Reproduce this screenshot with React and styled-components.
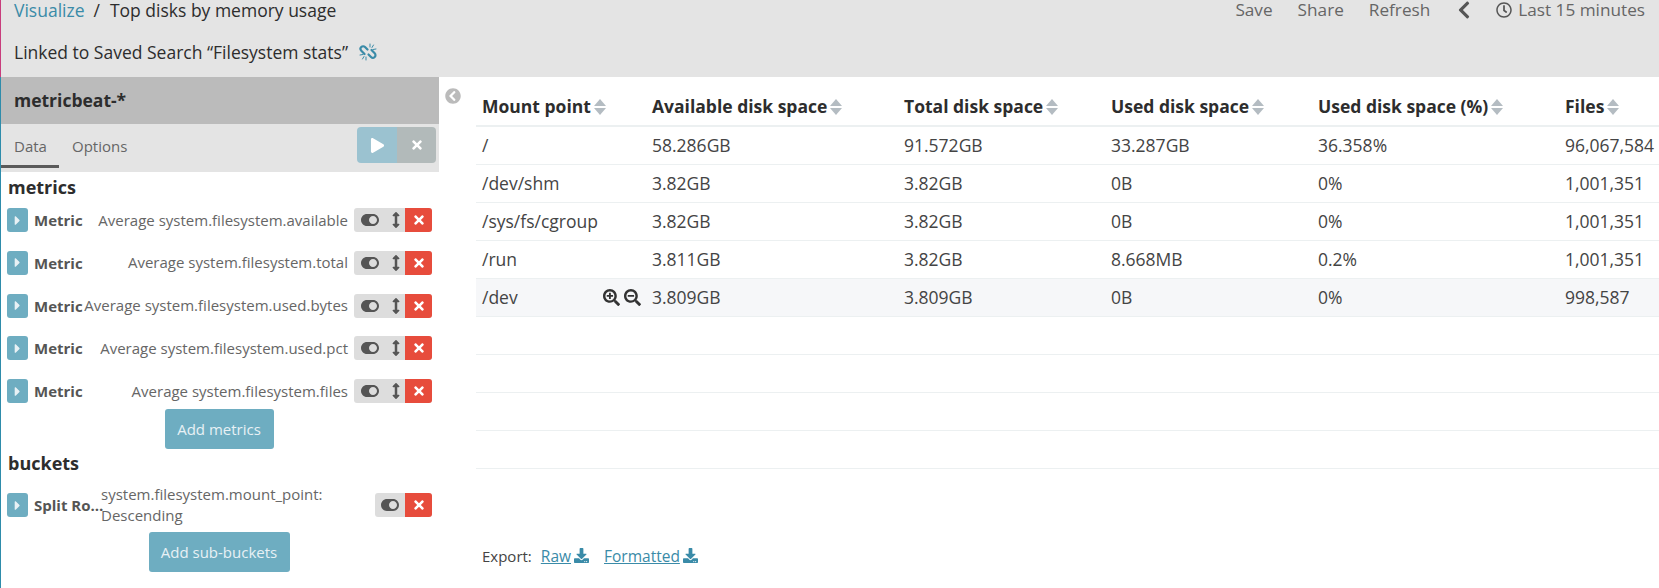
import React from "react";
import styled, { createGlobalStyle } from "styled-components";
import {
  FaArrowsAltV,
  FaCaretRight,
  FaChevronCircleLeft,
  FaChevronLeft,
  FaDownload,
  FaPlay,
  FaRegClock,
  FaSearchMinus,
  FaSearchPlus,
  FaTimes,
  FaToggleOn,
} from "react-icons/fa";

const Global = createGlobalStyle`
  html, body {
    margin: 0;
    height: 588px;
    overflow: hidden;
    background: #fff;
    font-family: "Open Sans", sans-serif;
    color: #444;
  }
  * { box-sizing: border-box; }
`;

const Nav = styled.header`
  height: 77px;
  background: #e4e4e4;
  border-left: 1px solid #c83d7c;
  padding-left: 13px;
  font-size: 17.5px;
`;

const NavTop = styled.div`
  display: flex;
  justify-content: space-between;
  height: 20px;
  line-height: 20px;
  margin-bottom: 21px;
`;

const Crumbs = styled.div`
  display: flex;
  color: #2d2d2d;
`;

const Crumb = styled.a`
  color: #3a8ba8;
`;

const Slash = styled.span`
  margin: 0 10px 0 9px;
`;

const NavMenu = styled.nav`
  display: flex;
  align-items: center;
  padding-right: 14px;
  color: #666;
  font-size: 17.2px;
`;

const MenuItem = styled.span`
  margin-left: ${(p) => p.$gap}px;
  display: flex;
  align-items: center;
  gap: ${(p) => p.$inner || 0}px;
`;

const LinkedLine = styled.div`
  display: flex;
  align-items: center;
  height: 22px;
  color: #2d2d2d;
  gap: 11px;
`;

const Main = styled.main`
  display: flex;
  height: 511px;
  border-left: 1px solid #2e8cab;
`;

const Sidebar = styled.aside`
  width: 438px;
  flex: none;
`;

const IndexName = styled.div`
  height: 47px;
  background: #bbb;
  padding-left: 13px;
  line-height: 47px;
  font-size: 17.5px;
  font-weight: 700;
  color: #2d2d2d;
`;

const TabBar = styled.div`
  position: relative;
  display: flex;
  height: 48px;
  background: #e4e4e4;
  font-size: 15px;
  color: #666;
`;

const Tab = styled.div`
  width: ${(p) => p.$width}px;
  height: 44px;
  padding: 12px 0 0 13px;
  line-height: 20px;
  border-bottom: ${(p) => (p.$active ? "3px solid #5a5a5a" : "none")};
`;

const ApplyGroup = styled.div`
  display: flex;
  height: 36px;
  margin: 3px 3px 0 auto;
  border-radius: 4px;
  overflow: hidden;
  color: #fff;
`;

const ApplyButton = styled.div`
  display: flex;
  align-items: center;
  justify-content: center;
  width: ${(p) => p.$width}px;
  background: ${(p) => p.$bg};
  font-size: ${(p) => p.$size}px;
`;

const SectionTitle = styled.div`
  height: ${(p) => p.$height}px;
  line-height: ${(p) => p.$height}px;
  padding-left: 7px;
  font-size: 18px;
  font-weight: 700;
  color: #2d2d2d;
`;

const Rows = styled.div`
  display: flex;
  flex-direction: column;
  gap: 18.75px;
  margin-top: ${(p) => p.$top}px;
`;

const AggRow = styled.div`
  display: flex;
  align-items: center;
  min-height: 24px;
  padding-left: 6px;
`;

const Expand = styled.div`
  flex: none;
  display: flex;
  align-items: center;
  justify-content: center;
  width: 21px;
  height: 24px;
  background: #6eadc1;
  border-radius: 3px;
  color: #e8f1f5;
  font-size: 15px;
`;

const AggName = styled.div`
  flex: none;
  margin-left: 6px;
  font-size: 15px;
  font-weight: 700;
  color: #555;
  white-space: nowrap;
  overflow: hidden;
  text-overflow: ellipsis;
  width: ${(p) => p.$width}px;
`;

const AggDesc = styled.div`
  flex: 1;
  min-width: 0;
  font-size: 15px;
  line-height: 21px;
  color: #666;
  white-space: nowrap;
  display: flex;
  justify-content: flex-end;
  padding-right: 6px;
`;

const BucketDesc = styled.div`
  flex: 1;
  min-width: 0;
  margin-left: -3px;
  font-size: 15px;
  line-height: 21px;
  color: #666;
`;

const Controls = styled.div`
  flex: none;
  display: flex;
  height: 24px;
  width: ${(p) => p.$width}px;
  margin-right: 7px;
  border-radius: 3px;
  overflow: hidden;
  background: #ddd;
  color: #555;
`;

const ControlCell = styled.div`
  flex: ${(p) => (p.$grow ? 1 : "none")};
  display: flex;
  align-items: center;
  justify-content: center;
  width: ${(p) => (p.$width ? `${p.$width}px` : "auto")};
  font-size: ${(p) => p.$size}px;
`;

const Delete = styled.div`
  flex: none;
  width: 27px;
  margin-left: auto;
  display: flex;
  align-items: center;
  justify-content: center;
  background: #e74c3c;
  color: #fff;
  font-size: 14px;
`;

const AddLine = styled.div`
  display: flex;
  justify-content: center;
  margin-top: ${(p) => p.$top}px;
  padding-right: 2px;
`;

const AddButton = styled.button`
  height: 40px;
  padding: 0;
  width: ${(p) => p.$width}px;
  border: 0;
  border-radius: 3px;
  background: #6eadc1;
  color: #e8f1f5;
  font: 400 15px "Open Sans", sans-serif;
`;

const Gutter = styled.div`
  flex: none;
  width: 37px;
  padding: 11px 0 0 6px;
  font-size: 16px;
  line-height: 16px;
  color: #bbb;
`;

const Content = styled.section`
  flex: 1;
  min-width: 0;
  overflow: hidden;
`;

const Table = styled.table`
  width: 1183px;
  table-layout: fixed;
  border-collapse: collapse;
  font-size: 17.5px;
  color: #444;
`;

const Th = styled.th`
  height: 49px;
  padding: 10px 0 0 6px;
  text-align: left;
  font-weight: 700;
  color: #2d2d2d;
  white-space: nowrap;
  border-bottom: 2px solid #ecf0f1;
`;

const SortIcon = styled.svg`
  width: 12px;
  height: 16px;
  margin-left: 3px;
  fill: #b4bcc2;
  vertical-align: -2px;
`;

const Tr = styled.tr`
  height: 38px;
  background: ${(p) => (p.$hover ? "#f6f7f9" : "transparent")};
`;

const Td = styled.td`
  padding: 0 0 0 6px;
  border-bottom: 1px solid #ecf0f1;
  white-space: nowrap;
`;

const MountCell = styled.div`
  display: flex;
  align-items: center;
  justify-content: space-between;
  padding-right: 5px;
`;

const ZoomIcons = styled.span`
  display: flex;
  gap: 4px;
  color: #333;
  font-size: 17px;
`;

const Export = styled.div`
  display: flex;
  align-items: center;
  margin: 76px 0 0 6px;
  height: 22px;
  font-size: 15px;
  color: #444;
`;

const ExportLink = styled.a`
  margin-left: ${(p) => p.$gap}px;
  color: #3a8ba8;
  font-size: 15.5px;
  text-decoration: underline;

  svg {
    font-size: 15px;
    vertical-align: -1px;
    margin-left: 3px;
  }
`;

const metrics = [
  "Average system.filesystem.available",
  "Average system.filesystem.total",
  "Average system.filesystem.used.bytes",
  "Average system.filesystem.used.pct",
  "Average system.filesystem.files",
];

const columns = [
  ["Mount point", 170],
  ["Available disk space", 252],
  ["Total disk space", 207],
  ["Used disk space", 207],
  ["Used disk space (%)", 247],
  ["Files", 100],
];

const rows = [
  ["/", "58.286GB", "91.572GB", "33.287GB", "36.358%", "96,067,584"],
  ["/dev/shm", "3.82GB", "3.82GB", "0B", "0%", "1,001,351"],
  ["/sys/fs/cgroup", "3.82GB", "3.82GB", "0B", "0%", "1,001,351"],
  ["/run", "3.811GB", "3.82GB", "8.668MB", "0.2%", "1,001,351"],
  ["/dev", "3.809GB", "3.809GB", "0B", "0%", "998,587"],
];

const Sort = () => (
  <SortIcon viewBox="0 0 12 16">
    <path d="M0 7 6 0l6 7z" />
    <path d="M0 9h12l-6 7z" />
  </SortIcon>
);

// fa-chain-broken, the package's unlink is mirrored
const BrokenLink = () => (
  <svg width="18" height="18" viewBox="0 0 18 18" fill="none" stroke="#3a8ba8" strokeLinecap="round">
    <path strokeWidth="2.2" d="M8.5 6.5 6 4a2.6 2.6 0 0 0-3.7 3.7L5.5 11" />
    <path strokeWidth="2.2" d="M9.5 11.5 12 14a2.6 2.6 0 0 0 3.7-3.7L12.5 7" />
    <path strokeWidth="1" d="M11 1v3M14.5 2l-1.5 2.5M17 6l-3 .5M1 12l3-.5M3.5 16 5 13.5M7 17v-3" />
  </svg>
);

export default function App() {
  return (
    <>
      <Global />
      <Nav>
        <NavTop>
          <Crumbs>
            <Crumb>Visualize</Crumb>
            <Slash>/</Slash>
            <span>Top disks by memory usage</span>
          </Crumbs>
          <NavMenu>
            <MenuItem>Save</MenuItem>
            <MenuItem $gap={25}>Share</MenuItem>
            <MenuItem $gap={25}>Refresh</MenuItem>
            <MenuItem $gap={24}>
              <FaChevronLeft size={20} color="#555" />
            </MenuItem>
            <MenuItem $gap={22} $inner={6}>
              <FaRegClock size={16} color="#555" />
              Last 15 minutes
            </MenuItem>
          </NavMenu>
        </NavTop>
        <LinkedLine>
          Linked to Saved Search “Filesystem stats”
          <BrokenLink />
        </LinkedLine>
      </Nav>
      <Main>
        <Sidebar>
          <IndexName>metricbeat-*</IndexName>
          <TabBar>
            <Tab $active $width={58}>Data</Tab>
            <Tab $width={80}>Options</Tab>
            <ApplyGroup>
              <ApplyButton $width={40} $bg="#9bc2d0" $size={15}><FaPlay /></ApplyButton>
              <ApplyButton $width={39} $bg="#b2baba" $size={14}><FaTimes /></ApplyButton>
            </ApplyGroup>
          </TabBar>
          <SectionTitle $height={30}>metrics</SectionTitle>
          <Rows $top={6}>
            {metrics.map((m) => (
              <AggRow key={m}>
                <Expand><FaCaretRight /></Expand>
                <AggName $width={49}>Metric</AggName>
                <AggDesc>{m}</AggDesc>
                <Controls $width={78}>
                  <ControlCell $width={32} $size={18}><FaToggleOn /></ControlCell>
                  <ControlCell $grow $size={16}><FaArrowsAltV /></ControlCell>
                  <Delete><FaTimes /></Delete>
                </Controls>
              </AggRow>
            ))}
          </Rows>
          <AddLine $top={6}>
            <AddButton $width={109}>Add metrics</AddButton>
          </AddLine>
          <SectionTitle $height={28}>buckets</SectionTitle>
          <Rows $top={7}>
            <AggRow>
              <Expand><FaCaretRight /></Expand>
              <AggName $width={70}>Split Rows</AggName>
              <BucketDesc>system.filesystem.mount_point: Descending</BucketDesc>
              <Controls $width={57}>
                <ControlCell $width={30} $size={18}><FaToggleOn /></ControlCell>
                <Delete><FaTimes /></Delete>
              </Controls>
            </AggRow>
          </Rows>
          <AddLine $top={6}>
            <AddButton $width={141}>Add sub-buckets</AddButton>
          </AddLine>
        </Sidebar>
        <Gutter><FaChevronCircleLeft /></Gutter>
        <Content>
          <Table>
            <colgroup>
              {columns.map(([name, width]) => (
                <col key={name} style={{ width }} />
              ))}
            </colgroup>
            <thead>
              <tr>
                {columns.map(([name]) => (
                  <Th key={name}>{name}<Sort /></Th>
                ))}
              </tr>
            </thead>
            <tbody>
              {rows.map((row) => (
                <Tr key={row[0]} $hover={row[0] === "/dev"}>
                  {row.map((cell, i) => (
                    <Td key={i}>
                      {i === 0 && row[0] === "/dev" ? (
                        <MountCell>
                          {cell}
                          <ZoomIcons><FaSearchPlus /><FaSearchMinus /></ZoomIcons>
                        </MountCell>
                      ) : (
                        cell
                      )}
                    </Td>
                  ))}
                </Tr>
              ))}
              {[0, 1, 2, 3].map((n) => (
                <Tr key={n}>
                  {columns.map(([name]) => <Td key={name} />)}
                </Tr>
              ))}
            </tbody>
          </Table>
          <Export>
            Export:
            <ExportLink $gap={9}>Raw<FaDownload /></ExportLink>
            <ExportLink $gap={15}>Formatted<FaDownload /></ExportLink>
          </Export>
        </Content>
      </Main>
    </>
  );
}
